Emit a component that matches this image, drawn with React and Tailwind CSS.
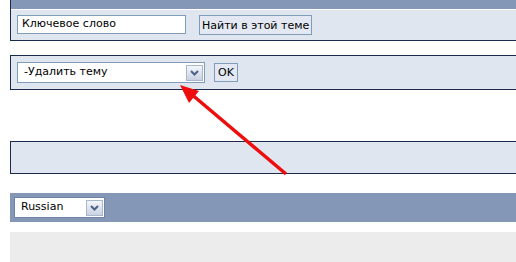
import React from 'react';

const ArrowBtn = () => (
    <span className="flex h-[16px] w-[17px] items-center justify-center border border-[#aab6cc] bg-gradient-to-b from-[#f4f6fa] to-[#c9d2e2]">
        <svg width="9" height="6" viewBox="0 0 9 6">
            <path d="M1 1 L4.5 4.5 L8 1" fill="none" stroke="#4d6185" strokeWidth="2" />
        </svg>
    </span>
);

const App = () => {
    return (
        <div className="relative h-[262px] w-[516px] overflow-hidden bg-white font-['DejaVu_Sans',Verdana,sans-serif] text-[11px] text-black">
            {/* search panel */}
            <div className="ml-[10px] w-[520px] border-b border-l border-[#1c2a4c]">
                <div className="h-[10px] border-b border-white bg-[#8597b7]" />
                <div className="flex h-[30px] items-start gap-[13px] bg-[#e0e6f0] pl-[6px] pt-[5px]">
                    <div className="flex h-[19px] w-[169px] items-center border border-[#7f9db9] bg-white pl-[4px]">
                        Ключевое слово
                    </div>
                    <button className="h-[20px] border border-[#7f9db9] bg-[#e3e8f2] px-[2px] leading-none">
                        Найти в этой теме
                    </button>
                </div>
            </div>

            {/* moderation panel */}
            <div className="ml-[10px] mt-[14px] w-[520px] border-y border-l border-[#1c2a4c]">
                <div className="flex h-[33px] items-start gap-[9px] bg-[#e0e6f0] pl-[6px] pt-[6px]">
                    <div className="flex h-[21px] w-[188px] items-center justify-between border border-[#7f9db9] bg-white pl-[6px] pr-[1px]">
                        <span>-Удалить тему</span>
                        <ArrowBtn />
                    </div>
                    <button className="mt-[1px] h-[19px] border border-[#7f9db9] bg-[#e3e8f2] px-[3px] leading-none">
                        OK
                    </button>
                </div>
            </div>

            {/* empty panel */}
            <div className="ml-[10px] mt-[51px] h-[33px] w-[520px] border-y border-l border-[#1c2a4c] bg-[#e0e6f0]" />

            {/* language bar */}
            <div className="ml-[10px] mt-[19px] flex h-[29px] w-[520px] items-center bg-[#8597b6] pl-[4px]">
                <div className="flex h-[21px] w-[91px] items-center justify-between border border-[#6f83a8] bg-white pl-[6px] pr-[1px]">
                    <span>Russian</span>
                    <ArrowBtn />
                </div>
            </div>

            {/* footer */}
            <div className="ml-[10px] mt-[10px] h-[40px] w-[520px] bg-[#ececec]" />

            {/* red annotation arrow */}
            <svg className="absolute left-0 top-0" width="516" height="262" viewBox="0 0 516 262">
                <line x1="286" y1="174" x2="190" y2="93" stroke="#ee0d0d" strokeWidth="3.5" />
                <polygon points="180,85 199,91 189,103" fill="#ee0d0d" />
            </svg>
        </div>
    );
};

export default App;
